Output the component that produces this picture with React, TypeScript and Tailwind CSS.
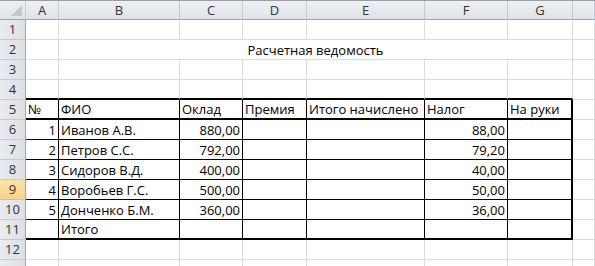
import React from 'react';

const cols = ['A', 'B', 'C', 'D', 'E', 'F', 'G', ''];

type Cell = { text?: string; right?: boolean };

const rows: Record<number, Cell[]> = {
  5: [{ text: '№' }, { text: 'ФИО' }, { text: 'Оклад' }, { text: 'Премия' }, { text: 'Итого начислено' }, { text: 'Налог' }, { text: 'На руки' }],
  6: [{ text: '1', right: true }, { text: 'Иванов А.В.' }, { text: '880,00', right: true }, {}, {}, { text: '88,00', right: true }, {}],
  7: [{ text: '2', right: true }, { text: 'Петров С.С.' }, { text: '792,00', right: true }, {}, {}, { text: '79,20', right: true }, {}],
  8: [{ text: '3', right: true }, { text: 'Сидоров В.Д.' }, { text: '400,00', right: true }, {}, {}, { text: '40,00', right: true }, {}],
  9: [{ text: '4', right: true }, { text: 'Воробьев Г.С.' }, { text: '500,00', right: true }, {}, {}, { text: '50,00', right: true }, {}],
  10: [{ text: '5', right: true }, { text: 'Донченко Б.М.' }, { text: '360,00', right: true }, {}, {}, { text: '36,00', right: true }, {}],
  11: [{}, { text: 'Итого' }, {}, {}, {}, {}, {}],
};

const gridCls =
  'grid grid-cols-[26px_33px_121px_63px_64px_118px_83px_65px_1fr]';

function DataCell({ r, c, cell }: { r: number; c: number; cell?: Cell }) {
  const inTable = r >= 5 && r <= 11 && c < 7;
  let cls = 'h-5 flex items-end pb-[2px] px-[2px] whitespace-nowrap overflow-visible ';
  // right line
  if (inTable && c === 6) cls += 'border-r-2 border-r-black ';
  else if (inTable) cls += 'border-r border-r-black ';
  else cls += 'border-r border-r-[#dadcdd] ';
  // bottom line
  if ((r === 4 || r === 5 || r === 11) && c < 7) cls += 'border-b-2 border-b-black ';
  else if (inTable) cls += 'border-b border-b-black ';
  else cls += 'border-b border-b-[#dadcdd] ';
  if (cell?.right) cls += 'justify-end ';
  return <div className={cls}>{cell?.text}</div>;
}

export default function App() {
  const rowNums = Array.from({ length: 13 }, (_, i) => i + 1);
  return (
    <div
      className="w-[595px] h-[266px] overflow-hidden bg-white text-[13px] text-black leading-none"
      style={{ fontFamily: '"Open Sans", "Liberation Sans", sans-serif' }}
    >
      <div className={`${gridCls} h-5 border-t border-t-[#9a9ea4]`}>
        <div className="relative bg-gradient-to-b from-[#eef0f3] to-[#dfe3e8] border-r border-r-[#c5cad1] border-b border-b-[#9da5ae]">
          <div className="absolute right-[3px] bottom-[3px] w-0 h-0 border-l-[11px] border-l-transparent border-b-[11px] border-b-[#c4c8cd]" />
        </div>
        {cols.map((c, i) => (
          <div
            key={i}
            className="flex items-center justify-center bg-gradient-to-b from-[#eef0f3] to-[#dfe3e8] border-r border-r-[#c5cad1] border-b border-b-[#9da5ae] text-[#333]"
          >
            {c}
          </div>
        ))}
      </div>
      {rowNums.map((r) => {
        const selected = r === 9;
        return (
          <div key={r} className={`${gridCls} h-5`}>
            <div
              className={
                selected
                  ? 'flex items-center justify-center bg-gradient-to-b from-[#fbe3a8] to-[#f8d48a] border-r border-r-[#9da5ae] border-b border-b-[#f0c060] text-[#333]'
                  : 'flex items-center justify-center bg-gradient-to-r from-[#e8ebef] to-[#dde1e6] border-r border-r-[#9da5ae] border-b border-b-[#c5cad1] text-[#333]'
              }
            >
              {r < 13 ? r : ''}
            </div>
            {r === 2 ? (
              <>
                <DataCell r={r} c={0} />
                <div className="col-span-6 h-5 flex items-end justify-center pb-[2px] border-r border-r-[#dadcdd] border-b border-b-[#dadcdd]">
                  Расчетная ведомость
                </div>
                <DataCell r={r} c={7} />
              </>
            ) : (
              cols.map((_, c) => <DataCell key={c} r={r} c={c} cell={rows[r]?.[c]} />)
            )}
          </div>
        );
      })}
    </div>
  );
}
